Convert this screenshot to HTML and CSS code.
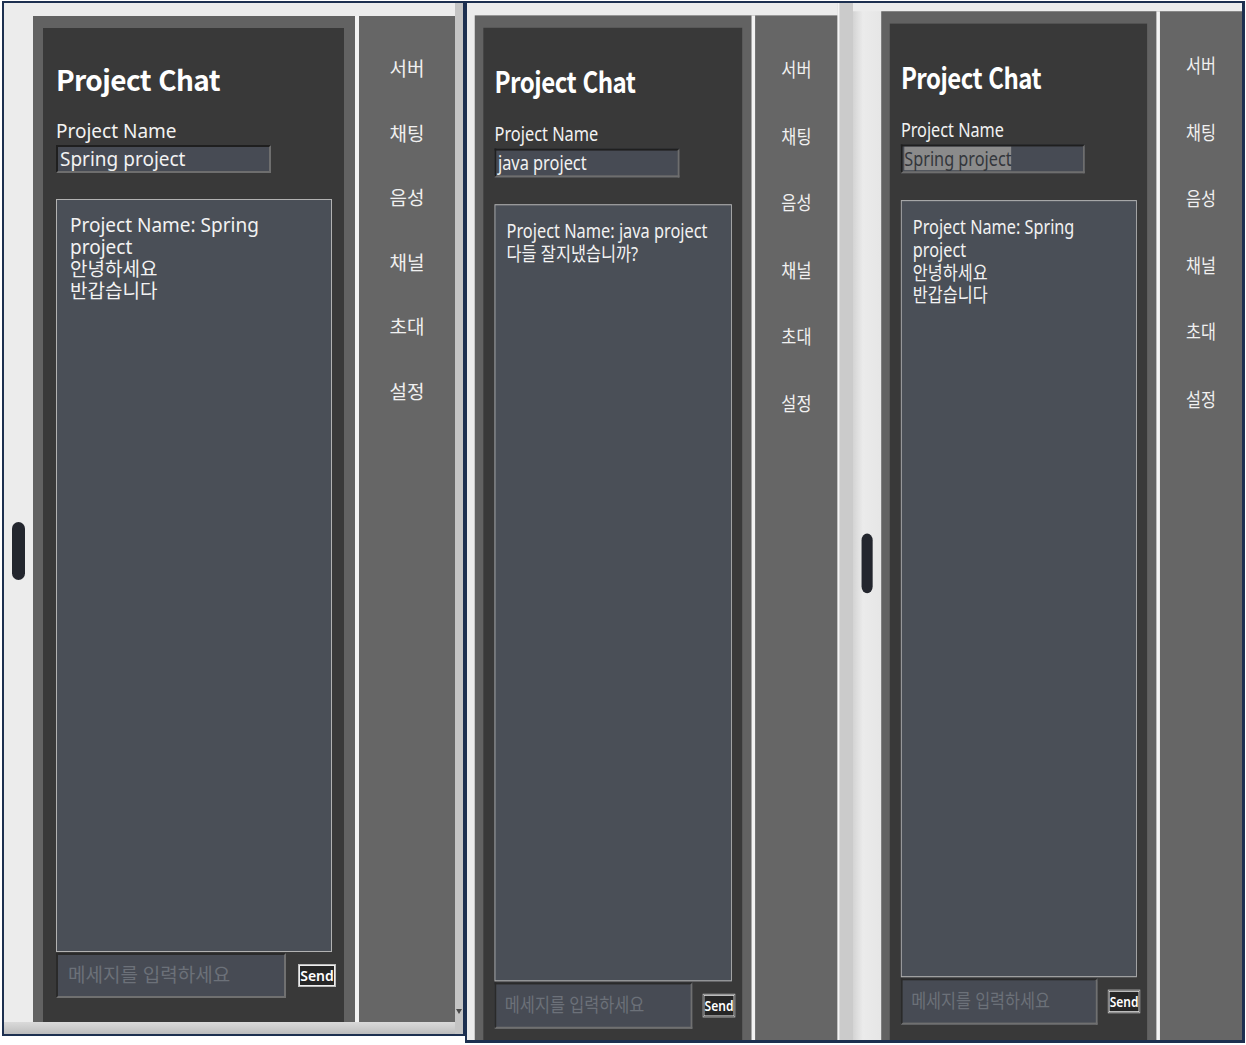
FILE: index.html
```html
<!DOCTYPE html>
<html lang="ko">
<head>
    <meta charset="UTF-8">
    <meta name="viewport" content="width=device-width, initial-scale=1.0">
    <title>Project Chat</title>
    <link rel="stylesheet" href="styles.css">
</head>
<body>
    <div class="desk">
        <!-- first capture -->
        <div class="shot shot-a">
            <div class="screen">
                <div class="view">
                    <div class="work">
                        <div class="gutter"><div class="pill"></div></div>
                        <div class="window">
                            <div class="pane">
                                <h1>Project Chat</h1>
                                <div class="label">Project Name</div>
                                <div class="field name">Spring project</div>
                                <div class="log">
                                    <p>Project Name: Spring project</p>
                                    <p>안녕하세요</p>
                                    <p>반갑습니다</p>
                                </div>
                                <div class="compose">
                                    <div class="field msg"><span class="hint">메세지를 입력하세요</span></div>
                                    <button class="send">Send</button>
                                </div>
                            </div>
                        </div>
                        <div class="sidebar">
                            <div class="nav-item">서버</div>
                            <div class="nav-item">채팅</div>
                            <div class="nav-item">음성</div>
                            <div class="nav-item">채널</div>
                            <div class="nav-item">초대</div>
                            <div class="nav-item">설정</div>
                        </div>
                    </div>
                    <div class="hbar"></div>
                </div>
                <div class="vbar"><span class="arrow"></span></div>
            </div>
        </div>

        <!-- second capture -->
        <div class="shot shot-b">
            <div class="screen">
                <div class="view">
                    <div class="work">
                        <div class="gutter"></div>
                        <div class="window">
                            <div class="pane">
                                <h1>Project Chat</h1>
                                <div class="label">Project Name</div>
                                <div class="field name">java project</div>
                                <div class="log">
                                    <p>Project Name: java project</p>
                                    <p>다들 잘지냈습니까?</p>
                                </div>
                                <div class="compose">
                                    <div class="field msg"><span class="hint">메세지를 입력하세요</span></div>
                                    <button class="send">Send</button>
                                </div>
                            </div>
                        </div>
                        <div class="sidebar">
                            <div class="nav-item">서버</div>
                            <div class="nav-item">채팅</div>
                            <div class="nav-item">음성</div>
                            <div class="nav-item">채널</div>
                            <div class="nav-item">초대</div>
                            <div class="nav-item">설정</div>
                        </div>
                    </div>
                </div>
                <div class="vbar"></div>
            </div>
        </div>

        <!-- third capture -->
        <div class="shot shot-c">
            <div class="screen">
                <div class="view">
                    <div class="work">
                        <div class="gutter"><div class="pill"></div></div>
                        <div class="window">
                            <div class="pane">
                                <h1>Project Chat</h1>
                                <div class="label">Project Name</div>
                                <div class="field name"><span class="sel">Spring project</span></div>
                                <div class="log">
                                    <p>Project Name: Spring project</p>
                                    <p>안녕하세요</p>
                                    <p>반갑습니다</p>
                                </div>
                                <div class="compose">
                                    <div class="field msg"><span class="hint">메세지를 입력하세요</span></div>
                                    <button class="send">Send</button>
                                </div>
                            </div>
                        </div>
                        <div class="sidebar">
                            <div class="nav-item">서버</div>
                            <div class="nav-item">채팅</div>
                            <div class="nav-item">음성</div>
                            <div class="nav-item">채널</div>
                            <div class="nav-item">초대</div>
                            <div class="nav-item">설정</div>
                        </div>
                    </div>
                </div>
            </div>
        </div>
    </div>
</body>
</html>
```

FILE: styles.css
```css
body {
    margin: 0;
    padding: 1px 0 0 2px;
    background-color: #ffffff;
    font-family: "Noto Sans", "Noto Sans CJK KR", sans-serif;
}

.desk {
    display: flex;
    align-items: flex-start;
}

.shot {
    flex-shrink: 0;
    overflow: hidden;
    border: 2px solid #1d3050;
    background-color: #ececec;
}

.shot-a {
    width: 463px;
    height: 1035px;
    box-sizing: border-box;
}

.shot-b {
    width: 388px;
    height: 1042px;
    box-sizing: border-box;
    border-right: none;
    border-bottom-width: 3px;
}

.shot-c {
    width: 392px;
    height: 1042px;
    box-sizing: border-box;
    border-left: none;
    border-right-width: 3px;
    border-bottom-width: 3px;
}

.screen {
    display: flex;
    background-color: #ececec;
    transform-origin: 0 0;
}

.shot-a .screen {
    --top: 13px;
    --gutter: 29px;
    --vbar: 8px;
    width: 459px;
    height: 1031px;
}

.shot-b .screen {
    --top: 12px;
    --gutter: 9px;
    --vbar: 18px;
    width: 449px;
    height: 1005px;
    transform: scale(0.86, 1.032);
}

.shot-c .screen {
    --top: 8px;
    --gutter: 33px;
    --vbar: 0px;
    width: 455px;
    height: 1005px;
    transform: scale(0.855, 1.032);
}

.view {
    flex: 1;
    min-width: 0;
    display: flex;
    flex-direction: column;
    padding-top: var(--top);
}

.work {
    flex: 1;
    min-height: 0;
    display: flex;
}

.gutter {
    width: var(--gutter);
    flex-shrink: 0;
    padding-top: 506px;
}

.shot-c .gutter {
    background: linear-gradient(to right, #d4d4d4, #ebebeb 35%, #e6e6e6);
}

.pill {
    width: 13px;
    height: 58px;
    margin-left: 8px;
    border-radius: 7px;
    background-color: #23262e;
}

.shot-c .pill {
    margin-left: 10px;
}

.window {
    width: 322px;
    flex-shrink: 0;
    box-sizing: border-box;
    display: flex;
    flex-direction: column;
    padding: 12px 11px 0 10px;
    background-color: #626262;
}

.pane {
    flex: 1;
    padding: 33px 12px 0 13px;
    background-color: #393939;
    color: #f2f2f2;
}

h1 {
    margin: 0;
    font-family: "Noto Sans CJK KR", "Noto Sans", sans-serif;
    font-size: 28px;
    line-height: 36px;
    letter-spacing: -0.6px;
    font-weight: bold;
    color: #ffffff;
}

.label {
    margin-top: 22px;
    font-size: 19px;
    line-height: 25px;
}

.field {
    box-sizing: border-box;
    overflow: hidden;
    white-space: nowrap;
    border: 2px solid;
    border-color: #1f1f1f #6e6e6e #6e6e6e #1f1f1f;
    background-color: #474b54;
    font-size: 19px;
}

.field.name {
    width: 215px;
    height: 28px;
    margin-top: 1px;
    padding-left: 2px;
    line-height: 24px;
}

.sel {
    display: inline-block;
    height: 23px;
    background-color: #8b8b8b;
    color: #33363b;
}

.log {
    box-sizing: border-box;
    width: 276px;
    height: 753px;
    margin-top: 26px;
    padding: 14px 16px 0 13px;
    border: 1px solid #b2b2b2;
    background-color: #4a4f57;
    font-size: 19px;
    line-height: 22px;
}

.log p {
    margin: 0;
}

.compose {
    display: flex;
    align-items: center;
    margin-top: 1px;
}

.field.msg {
    width: 230px;
    height: 45px;
    flex-shrink: 0;
    padding-left: 10px;
    border-color: #2a2a2a #707070 #707070 #2a2a2a;
    line-height: 41px;
}

.hint {
    color: #6c7179;
}

.send {
    flex-shrink: 0;
    width: 38px;
    height: 23px;
    margin-left: 12px;
    padding: 0;
    border: 1px solid #bdbdbd;
    box-shadow: inset 0 0 0 1px #ededed;
    background-color: #262626;
    color: #ffffff;
    font-family: "Noto Sans", sans-serif;
    font-size: 14px;
    font-weight: 600;
    line-height: 19px;
}

.sidebar {
    width: 100px;
    flex-shrink: 0;
    box-sizing: border-box;
    display: flex;
    flex-direction: column;
    align-items: center;
    gap: 40.6px;
    padding-top: 41px;
    border-left: 4px solid #f3f3f3;
    background-color: #666666;
    color: #f0f0f0;
}

.nav-item {
    font-size: 19px;
    line-height: 24px;
}

.hbar {
    height: 12px;
    background: linear-gradient(#dadada, #bdbdbd);
}

.vbar {
    width: var(--vbar);
    flex-shrink: 0;
    display: flex;
    flex-direction: column;
    justify-content: flex-end;
    align-items: center;
    padding-bottom: 20px;
    box-sizing: border-box;
    background-color: #c4c4c4;
}

.shot-b .vbar {
    border-left: 2px solid #f4f4f4;
    background-color: #cbcbcb;
}

.arrow {
    width: 0;
    height: 0;
    border-left: 3px solid transparent;
    border-right: 3px solid transparent;
    border-top: 5px solid #4a4a4a;
}
```
